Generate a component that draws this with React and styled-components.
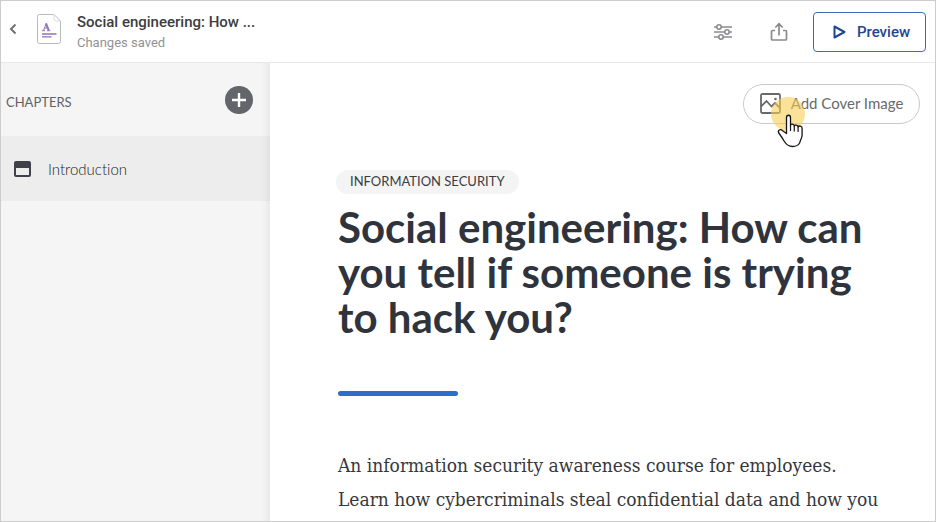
import styled, { createGlobalStyle } from "styled-components";

const GlobalStyle = createGlobalStyle`
  * {
    box-sizing: border-box;
  }
  body {
    margin: 0;
    background: #ffffff;
    font-family: Lato, sans-serif;
    font-variant-ligatures: none;
  }
  h1, h2, p {
    margin: 0;
  }
  button {
    padding: 0;
    border: 0;
    background: none;
    cursor: pointer;
  }
  svg {
    display: block;
    flex: none;
  }
`;

const Frame = styled.div`
  display: flex;
  flex-direction: column;
  min-height: 100vh;
  border: 1px solid #cccccc;
`;

const TopBar = styled.header`
  display: flex;
  align-items: center;
  height: 62px;
  padding: 0 9px 0 4px;
  border-bottom: 1px solid #e8e8e8;
  font-family: Roboto, sans-serif;
`;

const Lead = styled.div`
  display: flex;
  align-items: center;
  padding-bottom: 5px;
`;

const IconButton = styled.button`
  display: flex;
  align-items: center;
  justify-content: center;
  width: ${(p) => p.$width || 24}px;
  height: 32px;
  color: ${(p) => p.$color || "#8a8a8d"};
`;

const DocBadge = styled.span`
  display: flex;
  justify-content: center;
  width: 56px;
`;

const CourseInfo = styled.div`
  flex: 1;
  padding-top: 2px;
`;

const CourseName = styled.p`
  color: #3c3d40;
  font-size: 15px;
  font-weight: 500;
  line-height: 20px;
`;

const SaveState = styled.p`
  color: #929295;
  font-size: 13px;
  line-height: 22px;
`;

const Tools = styled.div`
  display: flex;
  align-items: center;
  gap: 32px;
  margin-right: 22px;
`;

const PreviewButton = styled.button`
  display: flex;
  align-items: center;
  justify-content: center;
  gap: 11px;
  width: 113px;
  height: 40px;
  padding-left: 4px;
  border: 1px solid #4468ad;
  border-radius: 4px;
  color: #1f4690;
  font-family: Roboto, sans-serif;
  font-size: 15px;
  font-weight: 500;
`;

const Columns = styled.div`
  display: flex;
  flex: 1;
`;

const Sidebar = styled.aside`
  flex: none;
  width: 269px;
  background: #f5f5f5;
  box-shadow: inset -8px 0 8px -6px #e4e4e4;
`;

const SidebarHead = styled.div`
  display: flex;
  align-items: center;
  justify-content: space-between;
  height: 73px;
  padding: 0 17px 0 5px;
`;

const SidebarTitle = styled.h2`
  padding-top: 4px;
  color: #606165;
  font-size: 13px;
  font-weight: 400;
`;

const AddButton = styled.button`
  display: flex;
  align-items: center;
  justify-content: center;
  width: 28px;
  height: 28px;
  border-radius: 50%;
  background: #64656b;
  color: #ffffff;
`;

const ChapterLink = styled.a`
  display: flex;
  align-items: center;
  gap: 17px;
  height: 65px;
  padding: 0 13px;
  background: rgba(0, 0, 0, 0.03);
  color: #1c1d21;
  font-size: 15px;
  font-weight: 300;
  text-decoration: none;
`;

const Page = styled.main`
  flex: 1;
  padding: 21px 15px 4px 68px;
`;

const CoverRow = styled.div`
  display: flex;
  justify-content: flex-end;
`;

const CoverButton = styled.button`
  position: relative;
  display: flex;
  align-items: center;
  justify-content: center;
  gap: 10px;
  width: 177px;
  height: 40px;
  padding-bottom: 2px;
  border: 1px solid #c9c9c9;
  border-radius: 20px;
  color: #68696c;
  font-family: Lato, sans-serif;
  font-size: 15px;
`;

const Pointer = styled.svg`
  position: absolute;
  top: 11px;
  left: 26px;
`;

const Article = styled.article`
  padding: 46px 35px 0 0;
`;

const Tag = styled.span`
  display: inline-flex;
  align-items: center;
  height: 24px;
  margin-left: -2px;
  padding: 0 14px 2px;
  border-radius: 12px;
  background: #f4f4f4;
  color: #3b3c42;
  font-size: 13px;
`;

const Title = styled.h1`
  margin-top: 11px;
  color: #2f333c;
  font-size: 42px;
  font-weight: 700;
  line-height: 45px;
`;

const Rule = styled.div`
  width: 120px;
  height: 5px;
  margin: 51px 0 52px;
  border-radius: 3px;
  background: #2f6dcb;
`;

const Summary = styled.p`
  color: #36373b;
  font-family: "DejaVu Serif Condensed", "DejaVu Serif", serif;
  font-size: 19px;
  line-height: 34px;
`;

const BackIcon = () => (
  <svg width="8" height="12" viewBox="0 0 8 12" fill="none" stroke="currentColor" strokeWidth="2">
    <path d="M6.500 1.500 2 6l4.500 4.500" />
  </svg>
);

const DocIcon = () => (
  <svg width="24" height="30" viewBox="0 0 24 30" fill="none">
    <path d="M2.500 .5H17l6.500 6.500V27.500a2 2 0 0 1-2 2h-19a2 2 0 0 1-2-2v-25a2 2 0 0 1 2-2z" fill="#fff" stroke="#b9b9c0" />
    <path d="M17 .5V5a2 2 0 0 0 2 2h4.500" stroke="#dedee3" />
    <path d="M6.500 16.500 9.300 9.300" stroke="#9173bd" />
    <path d="M9 9.300 11.800 16.500" stroke="#9173bd" strokeWidth="2" />
    <path d="M7.500 14h3.500M4.800 16.700h3.200M10 16.700h3.400" stroke="#9173bd" />
    <path d="M5 20h14.500M5 22.800h9.500" stroke="#9173bd" strokeWidth="1.300" />
  </svg>
);

const SlidersIcon = () => (
  <svg width="18" height="16" viewBox="0 0 18 16" fill="none" stroke="currentColor" strokeWidth="1.600">
    <path d="M0 3h2.500M7.500 3H18M0 8h10.500M15.500 8H18M0 13h4.500M9.500 13H18" />
    <circle cx="5" cy="3" r="2.200" />
    <circle cx="13" cy="8" r="2.200" />
    <circle cx="7" cy="13" r="2.200" />
  </svg>
);

const ShareIcon = () => (
  <svg width="18" height="20" viewBox="0 0 18 20" fill="none" stroke="currentColor" strokeWidth="1.700">
    <path d="M5 8.500H2.500a1 1 0 0 0-1 1V17a1 1 0 0 0 1 1h13a1 1 0 0 0 1-1V9.500a1 1 0 0 0-1-1H13M9 13.500V2M5.300 5.500 9 1.800l3.700 3.700" />
  </svg>
);

const PlayIcon = () => (
  <svg width="13" height="14" viewBox="0 0 13 14" fill="none" stroke="currentColor" strokeWidth="2" strokeLinejoin="round">
    <path d="M1.500 1.500 11.500 7l-10 5.500z" />
  </svg>
);

const PlusIcon = () => (
  <svg width="14" height="14" viewBox="0 0 14 14" stroke="currentColor" strokeWidth="2.400">
    <path d="M7 0v14M0 7h14" />
  </svg>
);

const ChapterIcon = () => (
  <svg width="17" height="16" viewBox="0 0 17 16">
    <path
      fillRule="evenodd"
      fill="#3f4148"
      d="M2 0h13a2 2 0 0 1 2 2v12a2 2 0 0 1-2 2H2a2 2 0 0 1-2-2V2a2 2 0 0 1 2-2zM2 7v7h13V7z"
    />
  </svg>
);

const ImageIcon = () => (
  <svg width="21" height="21" viewBox="0 0 21 21" fill="none" stroke="currentColor" strokeWidth="1.800">
    <rect x="1" y="1" width="19" height="19" rx="1.500" />
    <path d="M1 13.500 6.500 8l5 5.500 3.500-3.500 5 5" />
    <circle cx="15.500" cy="6" r="1.300" fill="currentColor" stroke="none" />
  </svg>
);

// click highlight with the hand on top of it
const HandPointer = () => (
  <Pointer width="38" height="54" viewBox="0 0 38 54" aria-hidden="true">
    <circle cx="18" cy="18" r="17" fill="#f8cf55" fillOpacity="0.6" />
    <path
      d="M16.500 37.500V21.500c0-3 4-3 4 0v8c.3-2 3.500-1.700 3.800.5.600-1.500 3.500-1.200 3.800.8.800-1.300 4-1 4 1.500v6.700c0 3-1.500 4.500-2.500 8-1.500 2.500-3.500 3.500-7 3.500-4.500 0-6.500-2-8.500-5.500-1.700-3-3.500-5.500-5.300-8-1.500-2.500 1.500-4.500 3.500-2.500z"
      fill="#fff"
      stroke="#151515"
      strokeWidth="1.300"
      strokeLinejoin="round"
    />
    <path d="M20.500 29v6M24.300 30v5.500M28.100 31v5" stroke="#151515" strokeWidth="1.200" />
  </Pointer>
);

export default function App() {
  return (
    <>
      <GlobalStyle />
      <Frame>
        <TopBar>
          <Lead>
            <IconButton $width={16} $color="#707174" aria-label="Back">
              <BackIcon />
            </IconButton>
            <DocBadge>
              <DocIcon />
            </DocBadge>
          </Lead>
          <CourseInfo>
            <CourseName>Social engineering: How ...</CourseName>
            <SaveState>Changes saved</SaveState>
          </CourseInfo>
          <Tools>
            <IconButton aria-label="Settings">
              <SlidersIcon />
            </IconButton>
            <IconButton aria-label="Share">
              <ShareIcon />
            </IconButton>
          </Tools>
          <PreviewButton>
            <PlayIcon />
            Preview
          </PreviewButton>
        </TopBar>
        <Columns>
          <Sidebar>
            <SidebarHead>
              <SidebarTitle>CHAPTERS</SidebarTitle>
              <AddButton aria-label="Add chapter">
                <PlusIcon />
              </AddButton>
            </SidebarHead>
            <ChapterLink href="#introduction">
              <ChapterIcon />
              Introduction
            </ChapterLink>
          </Sidebar>
          <Page>
            <CoverRow>
              <CoverButton>
                <ImageIcon />
                Add Cover Image
                <HandPointer />
              </CoverButton>
            </CoverRow>
            <Article id="introduction">
              <Tag>INFORMATION SECURITY</Tag>
              <Title>Social engineering: How can you tell if someone is trying to hack you?</Title>
              <Rule />
              <Summary>
                An information security awareness course for employees. Learn how cybercriminals steal confidential
                data and how you
              </Summary>
            </Article>
          </Page>
        </Columns>
      </Frame>
    </>
  );
}
